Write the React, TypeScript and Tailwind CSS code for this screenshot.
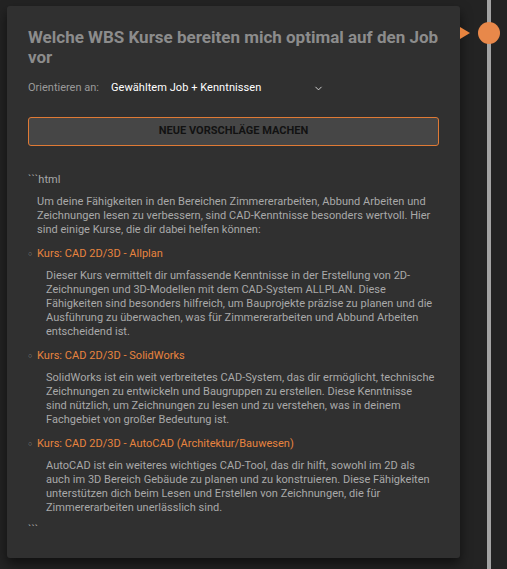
import React from 'react';
import { ChevronDown } from 'lucide-react';

type Course = {
  title: string;
  text: string;
};

const courses: Course[] = [
  {
    title: 'Kurs: CAD 2D/3D - Allplan',
    text: 'Dieser Kurs vermittelt dir umfassende Kenntnisse in der Erstellung von 2D-Zeichnungen und 3D-Modellen mit dem CAD-System ALLPLAN. Diese Fähigkeiten sind besonders hilfreich, um Bauprojekte präzise zu planen und die Ausführung zu überwachen, was für Zimmererarbeiten und Abbund Arbeiten entscheidend ist.',
  },
  {
    title: 'Kurs: CAD 2D/3D - SolidWorks',
    text: 'SolidWorks ist ein weit verbreitetes CAD-System, das dir ermöglicht, technische Zeichnungen zu entwickeln und Baugruppen zu erstellen. Diese Kenntnisse sind nützlich, um Zeichnungen zu lesen und zu verstehen, was in deinem Fachgebiet von großer Bedeutung ist.',
  },
  {
    title: 'Kurs: CAD 2D/3D - AutoCAD (Architektur/Bauwesen)',
    text: 'AutoCAD ist ein weiteres wichtiges CAD-Tool, das dir hilft, sowohl im 2D als auch im 3D Bereich Gebäude zu planen und zu konstruieren. Diese Fähigkeiten unterstützen dich beim Lesen und Erstellen von Zeichnungen, die für Zimmererarbeiten unerlässlich sind.',
  },
];

const App = () => {
  return (
    <div
      className="flex min-h-[569px] bg-[#232323]"
      style={{ fontFamily: 'Roboto, "Noto Sans", sans-serif' }}
    >
      {/* card */}
      <div className="relative ml-[7px] mt-[6px] w-[453px] self-start rounded-[3px] bg-[#303030] p-[21px] shadow-[0_6px_12px_rgba(0,0,0,0.55)]">
        <div className="absolute -right-[10px] top-[21px] h-0 w-0 border-y-[6px] border-l-[10px] border-y-transparent border-l-[#e8843f]" />

        <h1 className="text-[17px] font-bold leading-[20px] text-[#8c8c8c]">
          Welche WBS Kurse bereiten mich optimal auf den Job vor
        </h1>

        <div className="mt-[13px] flex items-center text-[11px] leading-[16px]">
          <span className="text-[#9a9a9a]">Orientieren an:</span>
          <div className="ml-[12px] flex w-[213px] items-center justify-between tracking-[0.06px] text-white">
            <span>Gewähltem Job + Kenntnissen</span>
            <ChevronDown size={11} strokeWidth={2} className="text-[#dddddd]" />
          </div>
        </div>

        <button className="mt-[21px] flex h-[29px] w-full items-center justify-center rounded-[3px] border border-[#e07a35] bg-[#464646] text-[11px] font-bold text-[#121212]">
          NEUE VORSCHLÄGE MACHEN
        </button>

        <div className="mt-[27px] text-[11px] leading-[14px] tracking-[0.03px] text-[#a9a9a9]">
          <p>```html</p>
          <p className="mt-[8px] pl-[9px]">
            Um deine Fähigkeiten in den Bereichen Zimmererarbeiten, Abbund Arbeiten und Zeichnungen lesen zu verbessern, sind CAD-Kenntnisse besonders wertvoll. Hier sind einige Kurse, die dir dabei helfen können:
          </p>
          <ul className="mt-[10px] flex flex-col gap-[10px]">
            {courses.map((c) => (
              <li key={c.title}>
                <div className="flex items-center">
                  <span className="w-[9px] text-[7px] text-[#8a8a8a]">○</span>
                  <span className="text-[#e8843f]">{c.title}</span>
                </div>
                <p className="mt-[8px] pl-[18px] pr-[4px]">{c.text}</p>
              </li>
            ))}
          </ul>
          <p className="mt-[8px]">```</p>
        </div>
      </div>

      {/* timeline */}
      <div className="relative ml-[27px] w-[4px] bg-[#a3a3a3]">
        <div className="absolute -left-[9px] top-[22px] h-[22px] w-[22px] rounded-full bg-[#e8884a]" />
      </div>
    </div>
  );
};

export default App;
